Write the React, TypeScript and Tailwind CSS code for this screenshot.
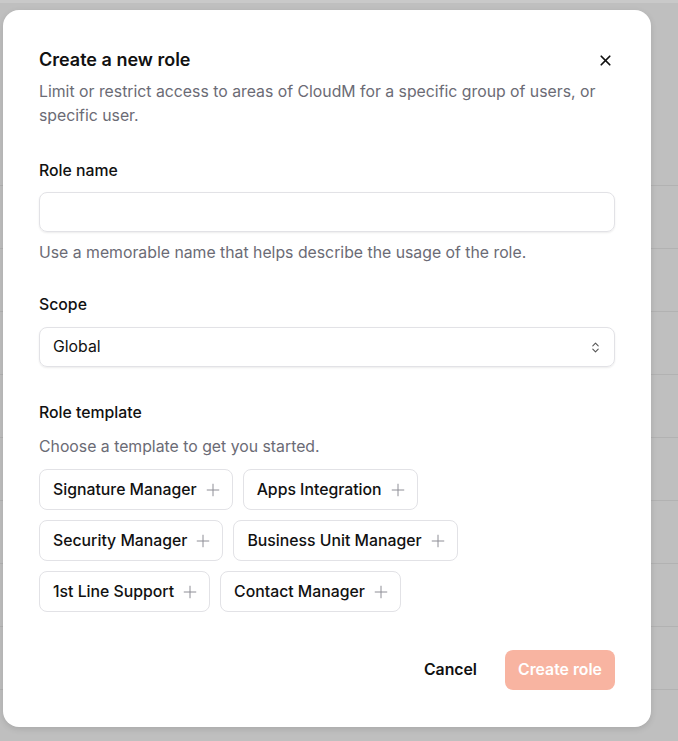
import React, { useState } from 'react';
import { X, Plus, ChevronsUpDown } from 'lucide-react';

// templates shown as chips
const templates: string[][] = [
  ['Signature Manager', 'Apps Integration'],
  ['Security Manager', 'Business Unit Manager'],
  ['1st Line Support', 'Contact Manager'],
];

function App() {
  const [roleName, setRoleName] = useState('');

  return (
    <div className="relative h-[741px] w-full overflow-hidden bg-[#bfbfbf] font-['Inter','Noto_Sans',sans-serif]">
      {/* page behind the overlay */}
      <div className="h-[3px] bg-[#c9c9c9]" />
      <div className="pt-[182px]">
        {Array.from({ length: 9 }).map((_, i) => (
          <div key={i} className="h-[63px] border-t border-[#b2b2b2]" />
        ))}
      </div>

      {/* dialog */}
      <div className="absolute left-[3px] top-[10px] w-[648px] rounded-2xl bg-white px-9 pt-9 pb-[37px] shadow-[0_2px_6px_rgba(0,0,0,0.12)]">
        <div className="flex items-center justify-between">
          <h2 className="text-[18px] leading-7 font-semibold text-[#111]">Create a new role</h2>
          <button className="mr-[1px] text-[#111]">
            <X size={17} strokeWidth={2.4} />
          </button>
        </div>
        <p className="mt-1.5 text-[15.8px] leading-6 text-[#6b6b75]">
          Limit or restrict access to areas of CloudM for a specific group of users, or specific user.
        </p>

        <label className="mt-8 block text-[15.8px] leading-[22px] font-medium text-[#111]">Role name</label>
        <input
          value={roleName}
          onChange={(e) => setRoleName(e.target.value)}
          className="mt-[10px] block h-10 w-full rounded-lg border border-[#e2e2e6] px-3 text-[15.8px] shadow-[0_1px_2px_rgba(0,0,0,0.08)] outline-none"
        />
        <p className="mt-[9px] text-[15.8px] leading-6 text-[#6b6b75]">
          Use a memorable name that helps describe the usage of the role.
        </p>

        <label className="mt-[29px] block text-[15.8px] leading-[22px] font-medium text-[#111]">Scope</label>
        <div className="mt-[11px] flex h-10 w-full items-center justify-between rounded-lg border border-[#e2e2e6] pl-[13px] pr-3 shadow-[0_1px_2px_rgba(0,0,0,0.08)]">
          <span className="text-[15.8px] text-[#111]">Global</span>
          <ChevronsUpDown size={13} strokeWidth={2} className="text-[#555]" />
        </div>

        <div className="mt-[35px] text-[15.8px] leading-[22px] font-medium text-[#111]">Role template</div>
        <p className="mt-[11px] text-[15.8px] leading-6 text-[#6b6b75]">Choose a template to get you started.</p>
        <div className="mt-[10px] flex flex-col gap-[10px]">
          {templates.map((row, i) => (
            <div key={i} className="flex gap-[10px]">
              {row.map((t) => (
                <button
                  key={t}
                  className="flex h-[41px] items-center gap-1.5 rounded-lg border border-[#e2e2e6] pl-[13px] pr-[9px] text-[15.8px] font-medium text-[#111]"
                >
                  {t}
                  <Plus size={20} strokeWidth={1.2} className="text-[#8e8e96]" />
                </button>
              ))}
            </div>
          ))}
        </div>

        <div className="mt-[38px] flex items-center justify-end gap-7">
          <button className="text-[15.8px] font-semibold text-[#111]">Cancel</button>
          <button className="h-10 w-[110px] rounded-lg bg-[#f8b4a1] text-[15.8px] font-semibold text-white">
            Create role
          </button>
        </div>
      </div>
    </div>
  );
}

export default App;
